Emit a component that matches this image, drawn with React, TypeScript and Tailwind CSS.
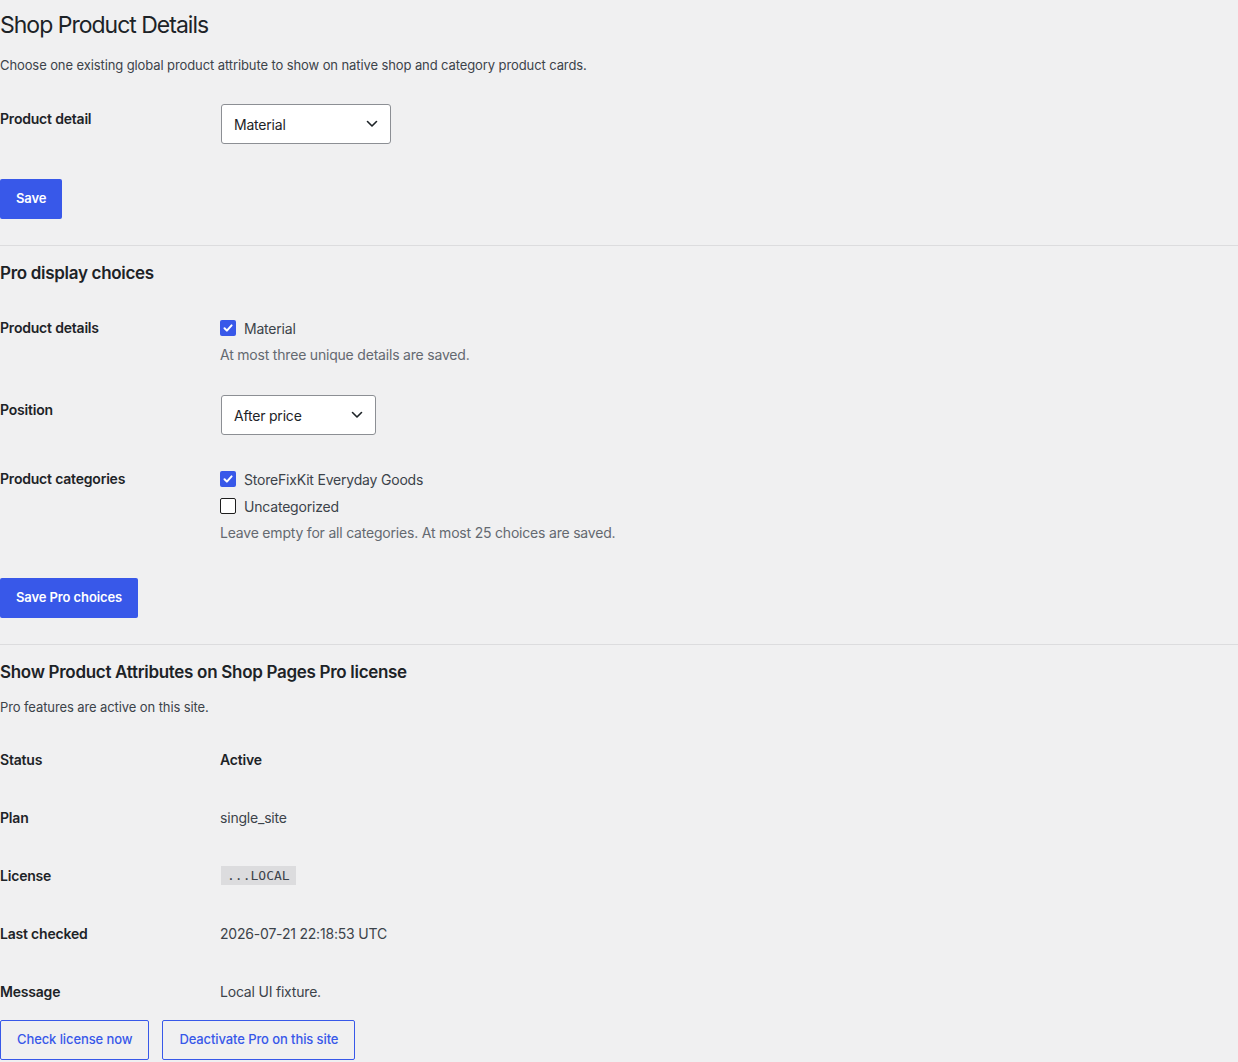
import React from "react";

const Chevron = () => (
  <svg width="12" height="8" viewBox="0 0 12 8" fill="none" className="shrink-0">
    <path d="M1.5 1.5L6 6l4.5-4.5" stroke="#1d2327" strokeWidth="1.6" strokeLinecap="round" strokeLinejoin="round" />
  </svg>
);

const Select = ({ value, width }: { value: string; width: string }) => (
  <div
    className={`ml-[1px] flex h-[40px] items-center justify-between rounded-[3px] border border-[#8c8f94] bg-white pl-[12px] pr-[12px] text-[14px] tracking-[-0.2px] text-[#1d2327] ${width}`}
  >
    <span>{value}</span>
    <Chevron />
  </div>
);

const Check = ({ checked, label }: { checked: boolean; label: string }) => (
  <div className="flex h-[20px] items-center gap-[8px] text-[14px] tracking-[-0.2px] text-[#3c434a]">
    {checked ? (
      <span className="flex h-[16px] w-[16px] items-center justify-center rounded-[2px] bg-[#3858e9]">
        <svg width="12" height="12" viewBox="0 0 12 12" fill="none">
          <path d="M2.5 6.2l2.4 2.4L9.6 3.4" stroke="white" strokeWidth="2" strokeLinecap="round" strokeLinejoin="round" />
        </svg>
      </span>
    ) : (
      <span className="h-[16px] w-[16px] rounded-[2px] border border-[#1e1e1e] bg-white" />
    )}
    <span>{label}</span>
  </div>
);

const Label = ({ children }: { children: React.ReactNode }) => (
  <div className="w-[220px] shrink-0 pt-[20px] text-[14px] font-semibold leading-[18px] tracking-[-0.2px] text-[#1d2327]">
    {children}
  </div>
);

const PrimaryButton = ({ children }: { children: React.ReactNode }) => (
  <button className="h-[40px] rounded-[2px] bg-[#3858e9] px-[16px] text-[13px] font-semibold tracking-[-0.1px] text-white">
    {children}
  </button>
);

const OutlineButton = ({ children }: { children: React.ReactNode }) => (
  <button className="h-[40px] rounded-[2px] border border-[#3858e9] px-[16px] text-[13px] font-medium tracking-[-0.1px] text-[#3858e9]">
    {children}
  </button>
);

const InfoRow = ({ label, children }: { label: string; children: React.ReactNode }) => (
  <div className="flex h-[58px] items-center text-[14px] tracking-[-0.2px]">
    <div className="w-[220px] shrink-0 font-semibold text-[#1d2327]">{label}</div>
    <div className="text-[#3c434a]">{children}</div>
  </div>
);

export default function App() {
  return (
    <div className="min-h-[1062px] bg-[#f0f0f1] font-['Inter','Liberation_Sans',sans-serif] text-[#3c434a]">
      <h1 className="pt-[10px] text-[23px] font-normal leading-[30px] tracking-[-1px] text-[#1d2327]">
        Shop Product Details
      </h1>
      <p className="mt-[15px] text-[13px] leading-[20px] tracking-[-0.1px] text-[#3c434a]">
        Choose one existing global product attribute to show on native shop and category product cards.
      </p>

      <div className="mt-[15px] flex">
        <Label>Product detail</Label>
        <div className="pb-[15px] pt-[14px]">
          <Select value="Material" width="w-[170px]" />
        </div>
      </div>
      <div className="mt-[20px]">
        <PrimaryButton>Save</PrimaryButton>
      </div>

      <hr className="mt-[26px] border-t border-[#dcdcde]" />

      <h2 className="mt-[16px] text-[17px] font-semibold leading-[22px] tracking-[-0.3px] text-[#1d2327]">
        Pro display choices
      </h2>

      <div className="mt-[15px] flex">
        <Label>Product details</Label>
        <div className="pb-[16px] pt-[19px]">
          <Check checked label="Material" />
          <p className="mt-[7px] text-[14px] leading-[20px] tracking-[-0.2px] text-[#646970]">
            At most three unique details are saved.
          </p>
        </div>
      </div>

      <div className="flex">
        <Label>Position</Label>
        <div className="pb-[15px] pt-[14px]">
          <Select value="After price" width="w-[155px]" />
        </div>
      </div>

      <div className="flex">
        <Label>Product categories</Label>
        <div className="flex flex-col gap-[7px] pb-[15px] pt-[19px]">
          <Check checked label="StoreFixKit Everyday Goods" />
          <Check checked={false} label="Uncategorized" />
          <p className="text-[14px] leading-[20px] tracking-[-0.2px] text-[#646970]">
            Leave empty for all categories. At most 25 choices are saved.
          </p>
        </div>
      </div>

      <div className="mt-[20px]">
        <PrimaryButton>Save Pro choices</PrimaryButton>
      </div>

      <hr className="mt-[26px] border-t border-[#dcdcde]" />

      <h2 className="mt-[16px] text-[17px] font-semibold leading-[22px] tracking-[-0.3px] text-[#1d2327]">
        Show Product Attributes on Shop Pages Pro license
      </h2>
      <p className="mt-[14px] text-[13px] leading-[20px] tracking-[-0.1px] text-[#3c434a]">
        Pro features are active on this site.
      </p>

      <div className="mt-[13px]">
        <InfoRow label="Status">
          <span className="font-semibold text-[#1d2327]">Active</span>
        </InfoRow>
        <InfoRow label="Plan">single_site</InfoRow>
        <InfoRow label="License">
          <code className="ml-[1px] bg-[#dcdcde] px-[6px] py-[2px] font-['DejaVu_Sans_Mono','Liberation_Mono',monospace] text-[13px] tracking-normal text-[#3c434a]">
            ...LOCAL
          </code>
        </InfoRow>
        <InfoRow label="Last checked">2026-07-21 22:18:53 UTC</InfoRow>
        <InfoRow label="Message">Local UI fixture.</InfoRow>
      </div>

      <div className="flex gap-[13px]">
        <OutlineButton>Check license now</OutlineButton>
        <OutlineButton>Deactivate Pro on this site</OutlineButton>
      </div>
    </div>
  );
}
